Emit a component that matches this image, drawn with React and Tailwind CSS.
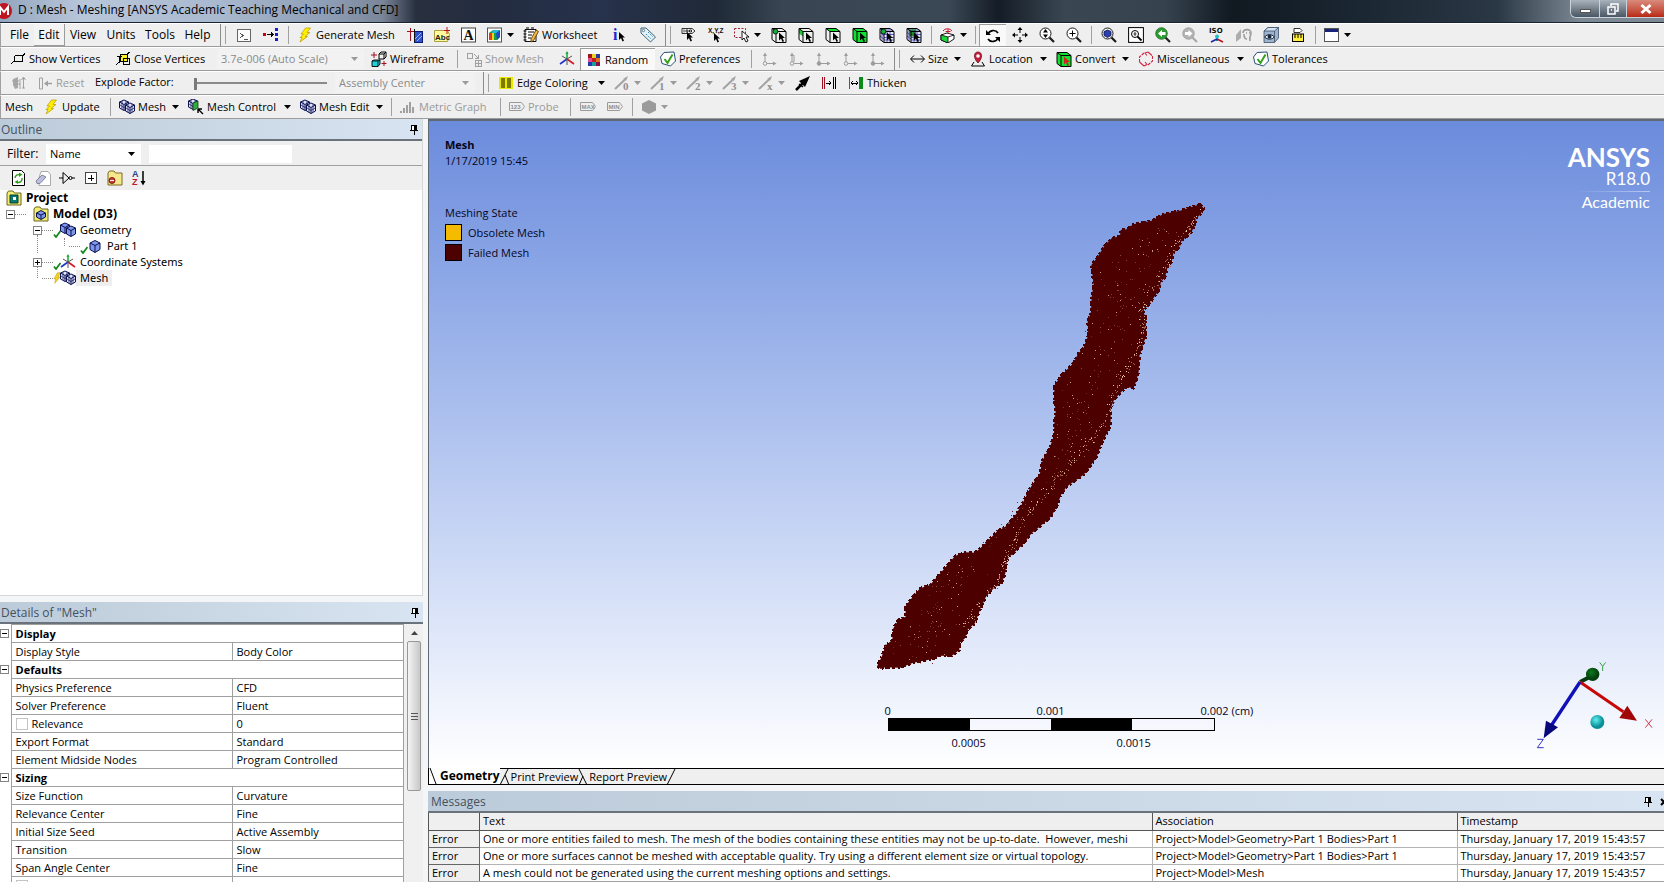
import React, { useState } from "react";

/* ---------- icons ---------- */

const Svg = ({ children, crisp }) => (
  <svg
    viewBox="0 0 16 16"
    className="w-4 h-4 shrink-0"
    fill="none"
    stroke="#000"
    shapeRendering={crisp ? "crispEdges" : "auto"}
  >
    {children}
  </svg>
);

const Cursor = ({ x = 7, y = 5, fill = "#000" }) => (
  <path
    transform={`translate(${x} ${y})`}
    d="M0 0v8l2-2 1.500 3.500 1.500-.7L3.500 5.500H6z"
    fill={fill}
    stroke="none"
  />
);

const SelectCube = ({ body = "#efefef", top, left, dot, grid, cursor = "#000" }) => (
  <Svg>
    <path d="M1 1.500h10l4 3v11H5l-4-3z" fill={body} stroke="none" />
    {top && <path d="M1 1.500h10l4 3H5z" fill={top} stroke="none" />}
    {left && <path d="M1 1.500l4 3v5l-4-3z" fill={left} stroke="none" />}
    {grid && (
      <path
        d="M5 7.500h10M5 10.500h10M5 13h10M8 4v11M11 4v11M3 2v12M4 3h10M1 5.500l4 3M1 9l4 3"
        stroke="#3c3c9c"
        strokeWidth=".8"
      />
    )}
    {grid === "green" && <path d="M3 2.500h7v7H3z" fill="#0a7a1a" stroke="none" opacity=".85" />}
    <path d="M1 1.500h10l4 3v11H5l-4-3zM1 1.500l4 3h10M5 4.500v11" strokeWidth="1" />
    {dot && <circle cx="4.500" cy="4.500" r="2.500" fill="#12b03a" strokeWidth=".8" />}
    <Cursor x={8} y={5.5} fill={cursor} />
  </Svg>
);

const MiniCube = ({ x = 0, y = 0, fill = "#7d97ea", mesh }) => (
  <g transform={`translate(${x} ${y})`}>
    <path d="M5 0l4.500 2v6L5 10.500.500 8V2z" fill={fill} stroke="#0b1050" />
    <path d="M.500 2L5 4.500 9.500 2M5 4.500v6" stroke="#0b1050" />
    {mesh && <path d="M1 5l4 2.500L9 5M3 1v8M7 1v8" stroke="#0b1050" strokeWidth=".7" />}
  </g>
);

const Bolt = () => (
  <Svg>
    <path d="M8.500 1h5L10 5.500h3L8 9.500h2.500L3 15l2-4.500H3L6.500 7H4z" fill="#ffee00" stroke="#b89a00" strokeWidth=".7" />
  </Svg>
);

const MeshCubes = () => (
  <Svg>
    <MiniCube x={0} y={1} fill="#dfe3fb" mesh />
    <MiniCube x={6} y={4} fill="#dfe3fb" mesh />
  </Svg>
);

const BodyCubes = () => (
  <Svg>
    <MiniCube x={0} y={1} />
    <MiniCube x={6} y={4} />
  </Svg>
);

const Triad = () => (
  <Svg>
    <path d="M8 8V1" stroke="#1fae3c" strokeWidth="1.600" />
    <path d="M8 8l7 5" stroke="#d11a2a" strokeWidth="1.600" />
    <path d="M8 8l-7 5" stroke="#2233cc" strokeWidth="1.600" />
    <path d="M8 8l-5-3M8 8l5-3M8 8v6" stroke="#555" strokeWidth="1" />
    <path d="M8 0l1.500 3h-3z" fill="#1fae3c" stroke="none" />
  </Svg>
);

const Check = () => (
  <Svg>
    <path d="M4 1.500L14 1l1.500 9-5 5L2 12.500.500 6z" fill="#fff" stroke="#28507c" />
    <path d="M4.500 8l3 4 5-8.500" stroke="#35a01c" strokeWidth="2" />
  </Svg>
);

const Lens = ({ children, handle = "#1a1a1a" }) => (
  <Svg>
    <circle cx="6.500" cy="6.500" r="5.500" fill="#fff" stroke="#1a1a1a" />
    <path d="M10.500 10.500l4.500 4.500" stroke={handle} strokeWidth="2.200" />
    {children}
  </Svg>
);

const AxisArrows = ({ lines, solid }) => (
  <Svg>
    <g stroke="#9c9c9c">
      <path d="M4 13V3M5 12.500h9" />
      <path d="M2 5l2-3.500L6 5zM12 10.500l3.500 2-3.500 2z" fill="#9c9c9c" stroke="none" />
      {lines === 2 && <path d="M6 11V4" />}
      <circle cx="4" cy="12.500" r="1.800" fill={solid ? "#9c9c9c" : "#efefef"} />
    </g>
  </Svg>
);

const EdgeLine = ({ label }) => (
  <Svg>
    <path d="M1 14l9.500-9" stroke="#a2a2a2" strokeWidth="2" />
    <path d="M9 4l5-3-2 5z" fill="#a2a2a2" stroke="none" />
    <text x="9" y="15" fontSize="11" fontFamily="Liberation Serif, serif" fontWeight="bold" fill="#8f8f8f" stroke="none">
      {label}
    </text>
  </Svg>
);

const Tag = ({ label }) => (
  <Svg>
    <path d="M.500 3.500h12l3 4-3 4H.500z" stroke="#9a9a9a" />
    <text x="1.500" y="10" fontSize="6" fontFamily="Liberation Sans, sans-serif" fontWeight="bold" fill="#8f8f8f" stroke="none">
      {label}
    </text>
  </Svg>
);

const icons = {
  console: (
    <Svg crisp>
      <rect x="1.500" y="2.500" width="13" height="12" fill="#fafafa" stroke="#666" />
      <path d="M4 6l3 2.500L4 11M8 12h4" stroke="#555" />
    </Svg>
  ),
  branch: (
    <Svg crisp>
      <path d="M0 6h3v3H0z" fill="#d00000" stroke="none" />
      <path d="M4 7.500h6M8 5.500l2 2-2 2" />
      <path d="M12 1h3v3h-3zM12 6h3v3h-3zM12 11h3v3h-3z" fill="#1020d0" stroke="none" />
    </Svg>
  ),
  section: (
    <Svg crisp>
      <path d="M7 4h8v11H7z" fill="#2f55d0" stroke="#0a1a70" />
      <path d="M8 12l6-6M10 14l5-5" stroke="#9fb7ff" />
      <path d="M0 4.500h7M3.500 1v13" stroke="#a01020" />
      <path d="M7.500 2v13" stroke="#111" />
    </Svg>
  ),
  abc: (
    <Svg>
      <path d="M.500 3.500h13l2 4-2 7H.500z" fill="#fffb9a" stroke="#a8a040" />
      <text x="1" y="13" fontSize="8" fontFamily="Liberation Sans, sans-serif" fontWeight="bold" fill="#222" stroke="none">
        Abc
      </text>
      <path d="M13 0v7M10 3.500h6" stroke="#c01020" />
    </Svg>
  ),
  text: (
    <Svg>
      <rect x=".500" y="1" width="14" height="14" fill="#fff" stroke="#444" />
      <text x="2.500" y="13" fontSize="14" fontFamily="Liberation Serif, serif" fontWeight="bold" fill="#111" stroke="none">
        A
      </text>
    </Svg>
  ),
  contour: (
    <Svg>
      <rect x=".500" y="1" width="14" height="14" fill="#fff" stroke="#555" />
      <path d="M2 6l4-3h7v7l-3 3H2z" fill="#18a040" stroke="none" />
      <path d="M2 6h3v7H2z" fill="#e03a20" stroke="none" />
      <path d="M5 6h2v7H5z" fill="#f2d21a" stroke="none" />
      <path d="M9 6l4-3v7l-3 3z" fill="#1b48d8" stroke="none" />
      <path d="M6 3h7L9 6H5z" fill="#25b8d8" stroke="none" />
    </Svg>
  ),
  worksheet: (
    <Svg>
      <path d="M2 2.500h11v12H2z" fill="#fff" stroke="#111" />
      <path d="M.500 4h3M.500 7h3M.500 10h3M.500 13h3M5 5h6M5 8h4M5 11h3M3 1h3M8 1h3" />
      <path d="M8 12l5-9 2.500 1.500-5 9L8 15z" fill="#f2b93a" stroke="#553300" strokeWidth=".8" />
    </Svg>
  ),
  info: (
    <Svg>
      <text x="0" y="13" fontSize="16" fontFamily="Liberation Serif, serif" fontWeight="bold" fill="#1a2ad0" stroke="none">
        i
      </text>
      <Cursor x={6} y={5} />
    </Svg>
  ),
  tag: (
    <Svg>
      <path d="M1 1l5 0 9.500 9-5 5L1 6z" fill="#e3f1f8" stroke="#3f6478" />
      <circle cx="3.500" cy="3.500" r="1.200" fill="#fff" stroke="#3f6478" strokeWidth=".8" />
      <path d="M6 7l5 5M8 5l5 5" stroke="#3f8ab0" strokeDasharray="1.500 1" />
    </Svg>
  ),
  pickLabel: (
    <Svg>
      <path d="M1 1.500h10l3 2.500-3 2.500H1z" fill="#fff" strokeWidth=".8" />
      <path d="M3 2.500v3M5 3h2v2H5zM8.500 3h2v2h-2z" strokeWidth=".8" />
      <Cursor x={6} y={5} />
    </Svg>
  ),
  pickXyz: (
    <Svg>
      <text x="0" y="5.500" fontSize="6.500" fontFamily="Liberation Sans, sans-serif" fontWeight="bold" fill="#111" stroke="none">
        X,Y,Z
      </text>
      <Cursor x={6} y={6} />
    </Svg>
  ),
  boxSelect: (
    <Svg>
      <rect x=".500" y="1.500" width="11" height="9" stroke="#a02038" strokeDasharray="2 1.500" />
      <path d="M8 4v9l2-2 2 4 2-1-2-4h3z" fill="#fff" strokeWidth=".9" />
    </Svg>
  ),
  selVertex: <SelectCube dot />,
  selEdge: <SelectCube left="#1fc83a" />,
  selFace: <SelectCube top="#10e030" />,
  selBody: <SelectCube body="#10e030" />,
  selNode: <SelectCube body="#e4e6fb" grid dot />,
  selElement: <SelectCube body="#d8dcf8" grid="green" />,
  convert: <SelectCube body="#10e030" cursor="#d02020" />,
  extend: (
    <Svg>
      <path d="M1 8l6-2 7 2v4l-6 4-7-3z" fill="#fff" strokeWidth=".9" />
      <path d="M1 8l7 2v6l-7-3z" fill="#19d838" strokeWidth=".8" />
      <path d="M8 10l6-2" strokeWidth=".8" />
      <path d="M3 4a5 4 0 0 1 9 0M8 2v5M5.500 4.500h5" stroke="#c01830" />
    </Svg>
  ),
  rotate: (
    <Svg>
      <path d="M3 6a5.500 5 0 0 1 10-1M13 10a5.500 5 0 0 1-10 1" strokeWidth="1.700" />
      <path d="M1 2v5h5zM15 14V9h-5z" fill="#000" stroke="none" />
    </Svg>
  ),
  pan: (
    <Svg>
      <path d="M8 2v4M8 10v4M2 8h4M10 8h4" />
      <path d="M8 0l2.500 3h-5zM8 16l2.500-3h-5zM0 8l3-2.500v5zM16 8l-3-2.500v5z" fill="#000" stroke="none" />
    </Svg>
  ),
  zoomDyn: (
    <Lens>
      <path d="M6.500 2l2.500 3.500H4zM6.500 11L9 7.500H4z" fill="#000" stroke="none" />
    </Lens>
  ),
  zoomIn: (
    <Lens>
      <path d="M6.500 3.500v6M3.500 6.500h6" />
    </Lens>
  ),
  zoomFit: (
    <Lens>
      <path d="M6.500 3L10 4.500v4L6.500 10.500 3 8.500v-4z" fill="#2a3fb0" stroke="#0b1050" strokeWidth=".8" />
    </Lens>
  ),
  zoomBox: (
    <Svg>
      <rect x=".600" y=".600" width="14.800" height="14.800" fill="#fff" />
      <circle cx="7" cy="7" r="3.500" />
      <path d="M9.500 9.500l4 4" strokeWidth="1.800" />
      <path d="M7 5v4M5.500 7h3" strokeWidth=".8" />
    </Svg>
  ),
  viewBack: (
    <Svg>
      <path d="M10.500 10.500l4.500 4.500" stroke="#222" strokeWidth="2.200" />
      <circle cx="6.500" cy="6.500" r="5.800" fill="#2f9a34" stroke="#1d6f22" strokeWidth=".8" />
      <path d="M3 6.500l4-3.500v2h3.500v3H7v2z" fill="#fff" stroke="none" />
    </Svg>
  ),
  viewNext: (
    <Svg>
      <path d="M10.500 10.500l4.500 4.500" stroke="#a8a8a8" strokeWidth="2.200" />
      <circle cx="6.500" cy="6.500" r="5.800" fill="#b2b2b2" stroke="#a0a0a0" strokeWidth=".8" />
      <path d="M10.500 6.500l-4-3.500v2H3v3h3.500v2z" fill="#fff" stroke="none" />
    </Svg>
  ),
  iso: (
    <Svg>
      <text x="0" y="6" fontSize="7" fontFamily="DejaVu Sans, sans-serif" fontWeight="bold" fill="#111" stroke="none">
        ISO
      </text>
      <path d="M8 8v6" stroke="#168f9a" strokeWidth="2" />
      <path d="M8 12l6 3" stroke="#b01020" strokeWidth="1.500" />
      <path d="M8 12l-6 3" stroke="#1a22b0" strokeWidth="1.500" />
      <circle cx="8" cy="9.500" r="2" fill="#20c0c0" stroke="none" />
    </Svg>
  ),
  lookAt: (
    <Svg>
      <path d="M0 8l5-6v9l-5 4z" fill="#adadad" stroke="none" />
      <path d="M7 6c0-4 8-5 8 0 0 3-2 3-1 8M8 7c0 3 1 5 3 5M10 6h1M13 6h1" stroke="#9c9c9c" strokeWidth="1.600" />
    </Svg>
  ),
  eye: (
    <Svg>
      <path d="M1 4l4-3.500h10.500V11l-4 4.500H1z" fill="#9fb3cc" stroke="#3a4f6c" strokeWidth=".8" />
      <path d="M1 4h10.500l4-3.500H5z" fill="#d5e2f0" stroke="#3a4f6c" strokeWidth=".8" />
      <path d="M11.500 4v11.500" stroke="#3a4f6c" strokeWidth=".8" />
      <path d="M1.500 10q5-5 10 0-5 4.500-10 0z" fill="#fff" stroke="#13233c" />
      <circle cx="6.500" cy="9.800" r="2" fill="#13233c" stroke="none" />
    </Svg>
  ),
  ruler: (
    <Svg>
      <path d="M4 1.500h6l2 2-2 2H4z" fill="#fff" strokeWidth=".8" />
      <rect x="2.500" y="7" width="11" height="7.500" fill="#ffee3a" />
      <path d="M5 7v4M8 7v4M11 7v4" />
    </Svg>
  ),
  windowBox: (
    <Svg crisp>
      <rect x=".500" y="1.500" width="14" height="13" fill="#fff" stroke="#555" />
      <path d="M1 3h13" stroke="#1a237a" strokeWidth="3" />
    </Svg>
  ),
  showVertices: (
    <Svg crisp>
      <path d="M5 4.500h8M4.500 5v5M1 13l3-3M13 4.500l2-2M12.500 4v6h-8V5" strokeWidth="1" />
    </Svg>
  ),
  closeVertices: (
    <Svg crisp>
      <path d="M5 3h7v7H5z" fill="#ffee20" />
      <path d="M8 7h6v6H8zM2 5h5M4 5v7M1 14l3-3M12 3l3-2" />
    </Svg>
  ),
  wireframe: (
    <Svg>
      <path d="M8 3l2-2h5v5l-2 2H8zM8 3h5v5M13 3l2-2" fill="none" strokeWidth="1" />
      <path d="M1 10l2-1h6v4l-2 2.500H1z" fill="#20d0d8" strokeWidth=".9" />
      <path d="M1 10h6v5.500M7 10l2-1" strokeWidth=".8" />
      <path d="M3 1v6M0 4h6M13 10v5M10.500 12.500h5" stroke="#a01020" />
    </Svg>
  ),
  showMesh: (
    <Svg crisp>
      <g stroke="#a0a0a0">
        <path d="M1 2h5v5H1zM9 9h6v6H9zM12 9v6M9 12h6M8 3l4 4M12 4v3H9" />
      </g>
    </Svg>
  ),
  triad: <Triad />,
  random: (
    <Svg crisp>
      <g stroke="none">
        <path d="M2 2h4v4H2z" fill="#a01818" />
        <path d="M6 2h4v4H6z" fill="#f0d020" />
        <path d="M10 2h4v4h-4z" fill="#283a9c" />
        <path d="M2 6h4v4H2z" fill="#e04a90" />
        <path d="M6 6h4v4H6z" fill="#c02020" />
        <path d="M10 6h4v4h-4z" fill="#e07020" />
        <path d="M2 10h4v4H2z" fill="#2038b0" />
        <path d="M6 10h4v4H6z" fill="#18a0a0" />
        <path d="M10 10h4v4h-4z" fill="#881048" />
      </g>
    </Svg>
  ),
  check: <Check />,
  size: (
    <Svg>
      <path d="M2 8h13M5 4.500L1.500 8 5 11.500M12 4.500L15.500 8 12 11.500" />
    </Svg>
  ),
  location: (
    <Svg>
      <path d="M8 12C3 7 3.500 1 8 1s5 6 0 11z" fill="#c01f3c" stroke="#7c0a20" strokeWidth=".8" />
      <circle cx="8" cy="5" r="1.800" fill="#fff" stroke="none" />
      <path d="M4 11l-2.500 4h13L12 11" />
    </Svg>
  ),
  misc: (
    <Svg>
      <g stroke="#d02848" strokeWidth="1.100">
        <path d="M6 2L1.500 6v5M10 14l4.500-4V5" strokeDasharray="3 1" />
        <path d="M10 1l4 3.500M6 15l-4.500-4M10 1l-3 1 2 2.500M6 15l3-1.500L7 11" />
      </g>
    </Svg>
  ),
  explode: (
    <Svg>
      <path d="M2 4l5-2v11l-3 1-2-4z" fill="#a8a8a8" stroke="none" />
      <path d="M1 6h7M3 9h6M9 4v10M11 13h3M12.500 13V3M10.500 5l2-3 2 3" stroke="#a0a0a0" />
    </Svg>
  ),
  reset: (
    <Svg>
      <path d="M2.500 3h3v11h-3z" stroke="#a0a0a0" />
      <path d="M8 8.500h7" stroke="#a0a0a0" strokeWidth="1.500" />
      <path d="M7 8.500l4-3v6z" fill="#a0a0a0" stroke="none" />
    </Svg>
  ),
  edgeColor: (
    <Svg crisp>
      <path d="M1 2h14v12H1z" fill="#e8e800" stroke="none" />
      <path d="M3 3h4v10H3zM9 3h4v10H9z" fill="#7c7a00" stroke="none" />
    </Svg>
  ),
  blackArrow: (
    <Svg>
      <path d="M1 15l7-7" strokeWidth="2.500" />
      <path d="M15 1L4 6l6 6z" fill="#000" stroke="none" />
      <path d="M4 9l4 3" strokeWidth="1.500" />
    </Svg>
  ),
  gap: (
    <Svg crisp>
      <path d="M0 2v12M2 2v12" stroke="#a01020" />
      <path d="M4 8h4M7 6l2 2-2 2" />
      <path d="M11 2v12M13 2v12" />
    </Svg>
  ),
  thicken: (
    <Svg crisp>
      <path d="M1.500 2v12" stroke="#0a8a1a" />
      <path d="M3 8h7M5 6L3 8l2 2M8 6l2 2-2 2" />
      <path d="M11 2h4v12h-4z" fill="#0a8a1a" stroke="none" />
    </Svg>
  ),
  meshControl: (
    <Svg>
      <MiniCube x={0} y={0} fill="#dfe3fb" mesh />
      <path d="M5 4l5-2v7l-5 2.500z" fill="#2fae3c" stroke="#064010" strokeWidth=".8" />
      <path d="M10 10l5 5M10 10v4M10 10h4" strokeWidth="1.400" />
    </Svg>
  ),
  graph: (
    <Svg crisp>
      <path d="M1 14v-2M4 14V9M7 14V6M10 14V3M13 14V8" stroke="#a0a0a0" strokeWidth="2" />
    </Svg>
  ),
  hexagon: (
    <Svg>
      <path d="M8 1l7 3.500v7L8 15l-7-3.500v-7z" fill="#9b9b9b" stroke="none" />
    </Svg>
  ),
  refresh: (
    <Svg>
      <path d="M2.500.500h9l3 3v12h-12z" fill="#fff" />
      <path d="M5 8a3.500 3.500 0 0 1 5-3M12 8a3.500 3.500 0 0 1-5 4" stroke="#2f9a1c" strokeWidth="1.400" />
      <path d="M9 2.500l3.500 2L9 7zM8 10l-3.500 2L8 14z" fill="#2f9a1c" stroke="none" />
    </Svg>
  ),
  eraser: (
    <Svg>
      <path d="M6 1.500h7l2.500 3v11H4V8z" fill="#fff" stroke="#aaa" />
      <path d="M1 11l6-6 4 2-6 6.500H2z" fill="#b9bfdd" stroke="#7a7a94" strokeWidth=".9" />
    </Svg>
  ),
  gate: (
    <Svg>
      <path d="M0 8h4M4 2.500l6 5.500-6 5.500zM13 8h3" />
      <circle cx="11.500" cy="8" r="1.500" />
    </Svg>
  ),
  plusBox: (
    <Svg crisp>
      <rect x="2.500" y="2.500" width="11" height="11" fill="#fff" stroke="#444" />
      <path d="M5 8h6M8 5v6" />
    </Svg>
  ),
  folder: (
    <Svg>
      <path d="M1 3l1.500-2H7l1.500 2H15v12H1z" fill="#f6e88c" stroke="#7c6a20" />
      <circle cx="5" cy="10.500" r="3" fill="#d04040" stroke="#600" strokeWidth=".8" />
      <path d="M3 10.500h4" stroke="#fff" />
    </Svg>
  ),
  sort: (
    <Svg>
      <g fontFamily="Liberation Sans, sans-serif" fontWeight="bold" fontSize="9" stroke="none">
        <text x="1" y="7" fill="#27408b">
          A
        </text>
        <text x="1" y="15" fill="#c01828">
          Z
        </text>
      </g>
      <path d="M12 1v11" strokeWidth="1.500" />
      <path d="M9.500 11h5L12 15.500z" fill="#000" stroke="none" />
    </Svg>
  ),
  project: (
    <Svg>
      <path d="M1 3l1.500-2H7l1.500 2H15v12H1z" fill="#f3ee70" stroke="#6b6420" />
      <path d="M4 5h8v8H4z" fill="#0a7a70" stroke="#063c38" />
      <path d="M7 7h3v3H7z" fill="#fff" stroke="none" />
    </Svg>
  ),
  model: (
    <Svg>
      <path d="M1 3l1.500-2H7l1.500 2H15v12H1z" fill="#f3ee70" stroke="#6b6420" />
      <path d="M8 4.500L12.500 7v4L8 13.500 3.500 11V7z" fill="#7d97ea" stroke="#0b1050" />
      <path d="M3.500 7L8 9l4.500-2M8 9v4" stroke="#0b1050" />
    </Svg>
  ),
  part: (
    <Svg>
      <path d="M8 2.500l5 2.500v6.500L8 14.500l-5-3V5z" fill="#7d97ea" stroke="#0b1050" />
      <path d="M3 5l5 2.500L13 5M8 7.500v7" stroke="#0b1050" />
    </Svg>
  ),
  bodies: <BodyCubes />,
  mesh: <MeshCubes />,
  bolt: <Bolt />,
};

const Caret = ({ muted }) => (
  <svg viewBox="0 0 7 4" className="w-[7px] h-1 shrink-0">
    <path d="M0 0h7L3.500 4z" fill={muted ? "#9a9a9a" : "#000"} />
  </svg>
);

const Pin = () => (
  <svg viewBox="0 0 8 10" className="w-2 h-[10px] shrink-0" shapeRendering="crispEdges">
    <path d="M1 0h6v5h1v1H0V5h1zM3.500 6h1v4h-1z" fill="#000" />
    <path d="M2 1h2v4H2z" fill="#fff" />
  </svg>
);

/* ---------- toolbar pieces ---------- */

const Bar = ({ children }) => (
  <div className="flex items-center h-6 pl-1 overflow-hidden border-t border-b border-l border-t-white border-b-[#9c9c9c] border-l-[#a0a0a0] bg-[#efefef]">
    {children}
  </div>
);

const Sep = () => (
  <div className="flex justify-center w-2 h-[18px] shrink-0">
    <div className="w-px bg-[#a0a0a0]" />
  </div>
);

const GroupEnd = () => (
  <div className="flex justify-center h-full gap-1 w-3.5 shrink-0">
    <div className="w-px bg-[#8c8c8c]" />
    <div className="w-px my-0.5 bg-[#a0a0a0]" />
  </div>
);

const Tool = ({ icon, label, caret, muted, pressed, width = "w-[27px]" }) => {
  const plain = !label && !caret;
  return (
    <button
      type="button"
      aria-label={label ? undefined : typeof icon === "string" ? icon : "tool"}
      disabled={muted}
      className={`flex items-center h-[22px] shrink-0 whitespace-nowrap ${width} ${
        plain ? "justify-center" : "gap-[3px] pl-[5px] pr-1"
      } ${muted ? "text-[#9a9a9a]" : "text-black"} ${
        pressed ? "bg-[#f9f9f9] border-l border-t border-[#9c9c9c]" : ""
      }`}
    >
      {typeof icon === "string" ? icons[icon] : icon}
      {label}
      {caret && (
        <span className="ml-auto">
          <Caret muted={muted} />
        </span>
      )}
    </button>
  );
};

const Combo = ({ label, value, muted, className }) => (
  <div className={`relative shrink-0 ${className}`}>
    <select
      aria-label={label}
      disabled={muted}
      className={`block w-full h-5 pl-1 appearance-none opacity-100 ${
        muted ? "bg-[#f2f2f2] text-[#8a8a8a]" : "bg-white text-black"
      }`}
    >
      <option>{value}</option>
    </select>
    <span className="absolute flex items-center pointer-events-none inset-y-0 right-1.5">
      <Caret muted={muted} />
    </span>
  </div>
);

const PaneTitle = ({ children, closable }) => (
  <div className="flex items-center h-[22px] pt-px pl-px pr-1 shrink-0 overflow-hidden border-b-2 border-[#6a737c] bg-linear-to-r from-[#bccbd9] to-[#d8e4f1] text-[#44515e] text-[12px]">
    <h2 className="flex-1">{children}</h2>
    <Pin />
    {closable && (
      <button type="button" aria-label="Close messages" className="w-1 h-2 ml-2 -mr-1 overflow-hidden">
        <svg viewBox="0 0 8 8" className="w-2 h-2" stroke="#000" strokeWidth="2">
          <path d="M1 1l6 6M7 1L1 7" />
        </svg>
      </button>
    )}
  </div>
);

/* ---------- title bar ---------- */

const TitleBar = () => (
  <header className="relative flex items-center h-[23px] pl-[18px] pb-0.5 shrink-0 border-b border-[#1a2330] text-black text-[12px] bg-[linear-gradient(90deg,#93a5be_0%,#b8c6da_5%,#a9b9cf_13%,#8c9cb4_20%,#7a8598_23%,#28303f_25%,#232c40_30%,#27324c_36%,#1f2937_43%,#394552_47%,#3a4855_57%,#141c26_60%,#3a4753_64%,#36434f_70%,#111921_74%,#1b2733_82%,#2a3744_90%,#7c8995_95%)]">
    <svg viewBox="0 0 12 16" className="absolute left-0 top-[3px] w-3 h-4">
      <circle cx="4" cy="8" r="8" fill="#c01420" />
      <path d="M0 12V4l4 5 4-5v8" fill="none" stroke="#fff" strokeWidth="2" />
    </svg>
    <h1 className="whitespace-nowrap">D : Mesh - Meshing [ANSYS Academic Teaching Mechanical and CFD]</h1>
    <div className="absolute right-0 top-0 flex h-[18px] overflow-hidden border border-t-0 border-r-0 rounded-bl-md border-[#c9d2da]">
      <button type="button" aria-label="Minimize" className="flex items-end justify-center pb-1 w-7 bg-linear-to-b from-[#a9b3bd] to-[#4a5663]">
        <span className="w-[11px] h-1 bg-white border border-[#555]" />
      </button>
      <button type="button" aria-label="Restore" className="flex items-center justify-center w-7 border-x border-[#c9d2da] bg-linear-to-b from-[#a9b3bd] to-[#4a5663]">
        <svg viewBox="0 0 12 12" className="w-3 h-3" fill="none" stroke="#fff" strokeWidth="1.500">
          <path d="M4 3V1h7v7H9M1 4h7v7H1zM4 7h1" />
        </svg>
      </button>
      <button type="button" aria-label="Close" className="flex items-center justify-center w-[37px] bg-linear-to-b from-[#d98a7c] to-[#b8260f]">
        <svg viewBox="0 0 12 12" className="w-3 h-3" stroke="#fff" strokeWidth="3">
          <path d="M1.500 2l9 8M10.500 2l-9 8" />
        </svg>
      </button>
    </div>
  </header>
);

const Toolbars = () => (
  <div className="shrink-0">
    <Bar>
      <nav className="flex w-[211px] shrink-0 text-[12px]">
        <button type="button" className="w-[29px]">File</button>
        <button type="button" className="h-[22px] w-[31px] bg-[#f3f3f3] border-r border-b border-[#9c9c9c]">Edit</button>
        <button type="button" className="w-9">View</button>
        <button type="button" className="w-10">Units</button>
        <button type="button" className="w-[38px]">Tools</button>
        <button type="button" className="w-[37px]">Help</button>
      </nav>
      <GroupEnd />
      <Tool icon="console" />
      <Tool icon="branch" />
      <Sep />
      <Tool icon="bolt" label="Generate Mesh" width="w-[109px]" />
      <Tool icon="section" />
      <Tool icon="abc" />
      <Tool icon="text" />
      <Tool icon="contour" caret width="w-9" />
      <Tool icon="worksheet" label="Worksheet" width="w-[89px]" />
      <Tool icon="info" />
      <Tool icon="tag" />
      <GroupEnd />
      <Tool icon="pickLabel" />
      <Tool icon="pickXyz" />
      <Tool icon="boxSelect" caret width="w-9" />
      <Tool icon="selVertex" />
      <Tool icon="selEdge" />
      <Tool icon="selFace" />
      <Tool icon="selBody" />
      <Tool icon="selNode" />
      <Tool icon="selElement" />
      <Sep />
      <Tool icon="extend" caret width="w-9" />
      <Sep />
      <Tool icon="rotate" pressed />
      <Tool icon="pan" />
      <Tool icon="zoomDyn" />
      <Tool icon="zoomIn" />
      <Sep />
      <Tool icon="zoomFit" />
      <Tool icon="zoomBox" />
      <Tool icon="viewBack" />
      <Tool icon="viewNext" muted />
      <Tool icon="iso" />
      <Tool icon="lookAt" muted />
      <Tool icon="eye" />
      <Tool icon="ruler" />
      <Sep />
      <Tool icon="windowBox" caret width="w-9" />
    </Bar>

    <Bar>
      <Tool icon="showVertices" label="Show Vertices" width="w-[105px]" />
      <Tool icon="closeVertices" label="Close Vertices" width="w-[105px]" />
      <Combo label="Vertex tolerance" value="3.7e-006 (Auto Scale)" muted className="mx-0.5 w-[147px]" />
      <Tool icon="wireframe" label="Wireframe" width="w-[87px]" />
      <Sep />
      <Tool icon="showMesh" label="Show Mesh" muted width="w-[92px]" />
      <Tool icon="triad" />
      <Tool icon="random" label="Random" pressed width="w-[75px]" />
      <Tool icon="check" label="Preferences" width="w-[92px]" />
      <Sep />
      <Tool icon={<AxisArrows />} muted />
      <Tool icon={<AxisArrows lines={2} />} muted />
      <Tool icon={<AxisArrows solid />} muted />
      <Tool icon={<AxisArrows />} muted />
      <Tool icon={<AxisArrows solid />} muted />
      <GroupEnd />
      <Tool icon="size" label="Size" caret width="w-[61px]" />
      <Tool icon="location" label="Location" caret width="w-[86px]" />
      <Tool icon="convert" label="Convert" caret width="w-[82px]" />
      <Tool icon="misc" label="Miscellaneous" caret width="w-[115px]" />
      <Tool icon="check" label="Tolerances" width="w-[92px]" />
    </Bar>

    <Bar>
      <Tool icon="explode" muted />
      <Tool icon="reset" label="Reset" muted width="w-[61px]" />
      <label htmlFor="explode" className="pb-0.5 pl-0.5 w-[101px] shrink-0 whitespace-nowrap">
        Explode Factor:
      </label>
      <input
        id="explode"
        type="range"
        defaultValue="0"
        className="w-[133px] h-4 shrink-0 appearance-none bg-transparent [&::-webkit-slider-runnable-track]:h-[2px] [&::-webkit-slider-runnable-track]:bg-[#8a8a8a] [&::-webkit-slider-thumb]:appearance-none [&::-webkit-slider-thumb]:w-[3px] [&::-webkit-slider-thumb]:h-3 [&::-webkit-slider-thumb]:-mt-1 [&::-webkit-slider-thumb]:bg-[#7a7a7a]"
      />
      <Combo label="Explode center" value="Assembly Center" muted className="ml-2 mr-1 w-[140px]" />
      <GroupEnd />
      <Tool icon="edgeColor" label="Edge Coloring" caret width="w-[116px]" />
      <Tool icon={<EdgeLine label="0" />} caret muted width="w-9" />
      <Tool icon={<EdgeLine label="1" />} caret muted width="w-9" />
      <Tool icon={<EdgeLine label="2" />} caret muted width="w-9" />
      <Tool icon={<EdgeLine label="3" />} caret muted width="w-9" />
      <Tool icon={<EdgeLine label="x" />} caret muted width="w-9" />
      <Tool icon="blackArrow" />
      <Tool icon="gap" />
      <Tool icon="thicken" label="Thicken" width="w-[75px]" />
    </Bar>

    <Bar>
      <span className="w-[33px] shrink-0">Mesh</span>
      <Tool icon="bolt" label="Update" width="w-[68px]" />
      <Sep />
      <Tool icon="mesh" label="Mesh" caret width="w-[69px]" />
      <Tool icon="meshControl" label="Mesh Control" caret width="w-[112px]" />
      <Tool icon="mesh" label="Mesh Edit" caret width="w-[92px]" />
      <Sep />
      <Tool icon="graph" label="Metric Graph" muted width="w-[101px]" />
      <Sep />
      <Tool icon={<Tag label="123" />} label="Probe" muted width="w-[62px]" />
      <Sep />
      <Tool icon={<Tag label="MAX" />} muted />
      <Tool icon={<Tag label="MIN" />} muted />
      <Sep />
      <Tool icon="hexagon" caret muted width="w-9" />
    </Bar>
  </div>
);

/* ---------- outline ---------- */

const Toggle = ({ open = true }) => (
  <svg viewBox="0 0 9 9" className="w-[9px] h-[9px] shrink-0" shapeRendering="crispEdges">
    <rect x=".500" y=".500" width="8" height="8" fill="#fff" stroke="#848484" />
    <path d={open ? "M2 4.500h5" : "M2 4.500h5M4.500 2v5"} stroke="#000" />
  </svg>
);

const Dots = () => <span className="w-[11px] border-t border-dotted border-[#888]" />;

const Tick = () => (
  <svg viewBox="0 0 8 8" className="self-end w-2 h-2 -mr-px">
    <path d="M1 4.500l2 2.500 4.500-6" fill="none" stroke="#128a1c" strokeWidth="1.800" />
  </svg>
);

const tree = [
  { label: "Project", icon: "project", bold: true, pad: "pl-[6px]" },
  { label: "Model (D3)", icon: "model", bold: true, pad: "pl-[6px]", toggle: "open" },
  { label: "Geometry", icon: "bodies", pad: "pl-[33px]", toggle: "open", state: "ok" },
  { label: "Part 1", icon: "part", pad: "pl-[60px]", state: "ok" },
  { label: "Coordinate Systems", icon: "triad", pad: "pl-[33px]", toggle: "closed", state: "ok" },
  { label: "Mesh", icon: "mesh", pad: "pl-[33px]", state: "bolt", selected: true },
];

const TreeRow = ({ node }) => (
  <li className={`flex items-center h-4 whitespace-nowrap ${node.pad}`}>
    {node.toggle && <Toggle open={node.toggle === "open"} />}
    {!node.toggle && node.state && <span className="w-[9px] shrink-0" />}
    {(node.toggle || node.state) && <Dots />}
    {node.state === "ok" && <Tick />}
    {node.state === "bolt" && (
      <svg viewBox="0 0 8 12" className="w-[7px] h-3">
        <path d="M5 0h3L6 5h2l-6 7 1-5H1z" fill="#f5d020" stroke="#b09000" strokeWidth=".5" />
      </svg>
    )}
    {node.toggle && !node.state && <span className="w-[7px]" />}
    {icons[node.icon]}
    <span
      className={`px-1 leading-4 ${node.bold ? "font-bold text-[12px]" : ""} ${
        node.selected ? "bg-[#efefef]" : ""
      }`}
    >
      {node.label}
    </span>
  </li>
);

const Outline = () => (
  <section className="flex flex-col flex-1 min-h-0 bg-white border-b border-r border-[#d8d8d8]">
    <PaneTitle>Outline</PaneTitle>
    <div className="flex items-center h-[25px] pt-px shrink-0 border-b border-[#a0a0a0] bg-[#efefef]">
      <label htmlFor="filterText" className="pl-[7px] w-[46px] text-[12px]">
        Filter:
      </label>
      <Combo label="Filter by" value="Name" className="w-[95px]" />
      <input id="filterText" type="text" className="ml-2 w-[143px] h-[18px] bg-white outline-none" />
    </div>
    <div className="flex items-center h-6 pl-1 shrink-0 bg-[#efefef]">
      <Tool icon="refresh" />
      <Tool icon="eraser" width="w-6" />
      <Tool icon="gate" width="w-6" />
      <Tool icon="plusBox" width="w-6" />
      <Tool icon="folder" width="w-6" />
      <Tool icon="sort" width="w-6" />
    </div>
    <div className="relative flex-1 text-[11px] font-['Noto_Sans',sans-serif]">
      <ul>
        {tree.map((node) => (
          <TreeRow key={node.label} node={node} />
        ))}
      </ul>
      {/* tree guide lines */}
      <span className="absolute left-[37px] top-[45px] h-[18px] border-l border-dotted border-[#888]" />
      <span className="absolute left-[37px] top-[77px] h-[11px] border-l border-dotted border-[#888]" />
      <span className="absolute left-16 top-12 h-2 border-l border-dotted border-[#888]" />
    </div>
  </section>
);

/* ---------- details ---------- */

const details = [
  { group: "Display" },
  { name: "Display Style", value: "Body Color" },
  { group: "Defaults" },
  { name: "Physics Preference", value: "CFD" },
  { name: "Solver Preference", value: "Fluent" },
  { name: "Relevance", value: "0", check: true },
  { name: "Export Format", value: "Standard" },
  { name: "Element Midside Nodes", value: "Program Controlled" },
  { group: "Sizing" },
  { name: "Size Function", value: "Curvature" },
  { name: "Relevance Center", value: "Fine" },
  { name: "Initial Size Seed", value: "Active Assembly" },
  { name: "Transition", value: "Slow" },
  { name: "Span Angle Center", value: "Fine" },
  { name: "Curvature Normal Angle", value: "Default (18.0 °)", check: true },
];

const Details = () => (
  <section className="flex flex-col h-[280px] shrink-0 mt-1.5 bg-[#f0f0f0]">
    <PaneTitle>Details of "Mesh"</PaneTitle>
    <div className="flex flex-1 min-h-0 overflow-hidden">
      <div className="flex-1 bg-white">
        <table className="w-full table-fixed border-collapse">
          <colgroup>
            <col className="w-[11px]" />
            <col className="w-[221px]" />
            <col />
          </colgroup>
          <tbody>
            {details.map((row) =>
              row.group ? (
                <tr key={row.group} className="h-[18px]">
                  <td className="p-0 align-middle">
                    <Toggle />
                  </td>
                  <th colSpan={2} className="p-0 pl-1 font-bold text-left border border-[#a0a0a0] leading-4">
                    {row.group}
                  </th>
                </tr>
              ) : (
                <tr key={row.name} className="h-[18px]">
                  <td className="p-0" />
                  <td className="p-0 pl-1 border border-[#a0a0a0] leading-4 whitespace-nowrap">
                    {row.check ? (
                      <label className="flex items-center gap-1">
                        <input type="checkbox" className="appearance-none w-3 h-3 bg-white border border-[#c4c4c4]" />
                        {row.name}
                      </label>
                    ) : (
                      row.name
                    )}
                  </td>
                  <td className="p-0 pl-1 border border-[#a0a0a0] leading-4 whitespace-nowrap">{row.value}</td>
                </tr>
              )
            )}
          </tbody>
        </table>
      </div>
      {/* scrollbar */}
      <div className="flex flex-col items-center ml-px w-[18px] bg-[#f0f0f0]">
        <div className="flex items-center h-[17px]">
          <svg viewBox="0 0 7 4" className="w-[7px] h-1">
            <path d="M0 4h7L3.500 0z" fill="#444" />
          </svg>
        </div>
        <div className="flex flex-col items-center justify-center gap-0.5 w-[14px] h-[150px] border border-[#989898] rounded-xs bg-linear-to-r from-[#f4f4f4] to-[#c8c8c8]">
          <span className="w-[7px] h-px bg-[#555]" />
          <span className="w-[7px] h-px bg-[#555]" />
          <span className="w-[7px] h-px bg-[#555]" />
        </div>
      </div>
    </div>
  </section>
);

/* ---------- viewport ---------- */

const OUTLINE =
  "M1020 43L1031 55L1020 75L1008 85L1003 110L992 130L965 152L955 175L940 190L935 215L922 235L915 262L903 275L897 300L880 325L865 345L848 362L857 380L858 410L858 440L848 465L838 500L836 545L828 575L820 595L800 590L780 610L762 630L752 655L752 690L750 710L738 735L725 760L710 800L690 830L670 855L645 872L620 890L603 915L592 945L575 978L545 1005L515 1030L490 1062L465 1085L445 1103L438 1125L436 1150L425 1180L400 1195L378 1220L362 1255L345 1300L322 1320L315 1345L298 1360L298 1380L275 1398L240 1397L215 1408L160 1418L120 1433L75 1432L62 1437L52 1427L65 1400L78 1365L97 1350L100 1315L115 1290L137 1280L137 1248L155 1225L180 1195L210 1185L245 1145L285 1098L315 1087L345 1088L375 1062L410 1025L440 1007L470 970L490 935L510 895L540 850L548 810L570 772L582 735L583 700L587 665L582 620L584 585L605 555L640 520L655 490L670 475L685 435L683 395L693 365L695 320L701 285L694 225L710 205L735 165L755 145L780 138L782 120L800 118L820 103L875 92L910 72L960 62Z";

// the visible grid holes gather along the ridge on the right side
const RIDGE = [
  [1018, 55, 10], [985, 120, 12], [945, 165, 12], [915, 235, 14], [870, 300, 22], [842, 360, 10], [850, 420, 8],
  [825, 490, 16], [790, 550, 14], [760, 610, 10], [735, 700, 10], [690, 750, 18], [640, 810, 14], [590, 870, 16],
  [530, 935, 12], [490, 990, 10], [460, 1060, 12], [434, 1110, 6], [410, 1180, 12], [340, 1260, 22], [310, 1310, 14],
];

const SPINE = [
  [930, 110, 60], [820, 200, 90], [780, 290, 75], [765, 370, 75], [740, 480, 70], [690, 590, 80], [655, 680, 60],
  [620, 760, 40], [570, 860, 25], [330, 1130, 55], [250, 1200, 70], [220, 1280, 90], [200, 1350, 80], [120, 1400, 45],
];

const makeSpecks = () => {
  let seed = 7;
  const rnd = () => {
    seed = (seed * 16807) % 2147483647;
    return seed / 2147483647;
  };
  const out = [];
  const scatter = (line, count, tones) => {
    for (let i = 0; i < line.length - 1; i++) {
      for (let k = 0; k < count; k++) {
        const t = rnd();
        const spread = line[i][2] * (rnd() + rnd() - 1);
        const x = line[i][0] + (line[i + 1][0] - line[i][0]) * t + spread;
        const y = line[i][1] + (line[i + 1][1] - line[i][1]) * t + spread * 0.4;
        out.push([Math.round(x / 3) * 3, Math.round(y / 3) * 3, tones[Math.floor(rnd() * tones.length)]]);
      }
    }
  };
  scatter(RIDGE, 20, ["#e8c8a0", "#c08a70", "#a87058", "#94604c"]);
  scatter(SPINE, 26, ["#8c4a3c", "#6e2a22", "#c89c80", "#7c3a30"]);
  return out;
};

const specks = makeSpecks();

const MeshBody = () => (
  <svg viewBox="0 0 1080 1470" className="absolute left-1/2 top-[69px] -ml-[187px] w-[360px] h-[490px]">
    <path d={OUTLINE} fill="#4d0000" />
    {/* broken outline gives the rough faceted edge */}
    <path d={OUTLINE} fill="none" stroke="#4d0000" strokeWidth="8" strokeDasharray="9 6 14 5 6 8" shapeRendering="crispEdges" />
    <g shapeRendering="crispEdges">
      {specks.map(([x, y, fill], i) => (
        <rect key={i} x={x} y={y} width="3" height="3" fill={fill} />
      ))}
    </g>
  </svg>
);

const ScaleBar = () => (
  <div className="absolute bottom-[17px] left-1/2 -ml-[159px] w-[370px] leading-4">
    <div className="relative h-[15px]">
      <span className="absolute -left-[3px]">0</span>
      <span className="absolute left-[149px]">0.001</span>
      <span className="absolute left-[313px]">0.002 (cm)</span>
    </div>
    <div className="flex w-[327px] h-[13px] border border-black">
      <span className="flex-1 bg-black" />
      <span className="flex-1" />
      <span className="flex-1 bg-black" />
      <span className="flex-1" />
    </div>
    <div className="relative h-5 pt-1">
      <span className="absolute left-16">0.0005</span>
      <span className="absolute left-[229px]">0.0015</span>
    </div>
  </div>
);

const AxisTriad = () => (
  <svg viewBox="0 0 492 384" className="absolute bottom-0 right-0 w-[164px] h-32">
    <defs>
      <radialGradient id="ball" cx="40%" cy="35%">
        <stop offset="0" stopColor="#5ff0f0" />
        <stop offset="1" stopColor="#0a8f98" />
      </radialGradient>
      <radialGradient id="knob" cx="40%" cy="35%">
        <stop offset="0" stopColor="#0c7a1e" />
        <stop offset="1" stopColor="#04400c" />
      </radialGradient>
    </defs>
    <path d="M240 126L275 108" stroke="#063c10" strokeWidth="12" />
    <circle cx="278" cy="103" r="20" fill="url(#knob)" />
    <path d="M240 126L370 215" stroke="#c80808" strokeWidth="9" />
    <path d="M382 197L411 242L358 234z" fill="#a00808" />
    <path d="M240 126L155 255" stroke="#1010b8" strokeWidth="10" />
    <path d="M138 242L174 262L131 295z" fill="#08087c" />
    <circle cx="292" cy="246" r="21" fill="url(#ball)" />
    <g fill="none" strokeWidth="3">
      <path d="M299 67l9 12 9-12M308 79v14" stroke="#3aa048" />
      <path d="M436 238l20 25M456 238l-20 25" stroke="#d03848" />
      <path d="M112 298h18l-18 25h19" stroke="#3434c8" />
    </g>
  </svg>
);

const Viewport = () => (
  <div className="relative flex-1 min-h-0 overflow-hidden border-t-2 border-l border-[#5f6873] bg-linear-to-b from-[#6b8bdc] to-white text-[#05051c]">
    <div className="absolute left-4 top-4 leading-4">
      <p className="font-bold">Mesh</p>
      <p>1/17/2019 15:45</p>
    </div>
    <div className="absolute left-4 top-[84px] flex flex-col gap-[3px]">
      <p className="leading-4">Meshing State</p>
      <p className="flex items-center gap-1.5 leading-[17px]">
        <span className="bg-[#f5bb00] border border-black w-[17px] h-[17px]" />
        Obsolete Mesh
      </p>
      <p className="flex items-center gap-1.5 leading-[17px]">
        <span className="bg-[#4d0000] border border-black w-[17px] h-[17px]" />
        Failed Mesh
      </p>
    </div>
    <div className="absolute right-[14px] top-[22px] text-right text-white font-[Lato,sans-serif]">
      <p className="font-bold text-[26px] leading-[28px]">ANSYS</p>
      <p className="text-[17px] leading-4">R18.0</p>
      <div className="h-px mt-1 ml-2 bg-linear-to-r from-transparent to-[#b9c8f0]" />
      <p className="text-base leading-5">Academic</p>
    </div>
    <MeshBody />
    <ScaleBar />
    <AxisTriad />
  </div>
);

const TabEdge = ({ d }) => (
  <svg viewBox="0 0 11 16" className="w-[11px] h-4 shrink-0" fill="none" stroke="#000">
    <path d={d} />
  </svg>
);

const Tabs = () => {
  const [active, setActive] = useState("Geometry");
  const cls = (name) => `h-4 leading-4 -mt-px ${active === name ? "font-bold bg-white" : "border-t border-black"}`;
  return (
    <div className="flex h-[17px] shrink-0 border-t border-b border-l border-black bg-[#efefef] text-[12px]">
      <div className="-mt-px bg-white">
        <TabEdge d="M1 0l6 16" />
      </div>
      <button type="button" className={cls("Geometry")} onClick={() => setActive("Geometry")}>Geometry</button>
      <TabEdge d="M0 16L8 0M5 6l4 10" />
      <button type="button" className={`text-[11px] ${cls("Print Preview")}`} onClick={() => setActive("Print Preview")}>Print Preview</button>
      <TabEdge d="M1 0l8 16M1 16l4-9" />
      <button type="button" className={`text-[11px] ${cls("Report Preview")}`} onClick={() => setActive("Report Preview")}>Report Preview</button>
      <TabEdge d="M0 16L8 0" />
    </div>
  );
};

/* ---------- messages ---------- */

const messages = [
  {
    text: "One or more entities failed to mesh. The mesh of the bodies containing these entities may not be up-to-date.  However, meshi",
    source: "Project>Model>Geometry>Part 1 Bodies>Part 1",
  },
  {
    text: "One or more surfaces cannot be meshed with acceptable quality. Try using a different element size or virtual topology.",
    source: "Project>Model>Geometry>Part 1 Bodies>Part 1",
  },
  {
    text: "A mesh could not be generated using the current meshing options and settings.",
    source: "Project>Model>Mesh",
  },
];

const Messages = () => (
  <section className="mt-1.5 h-[91px] shrink-0 overflow-hidden bg-white">
    <PaneTitle closable>
      <span className="pl-0.5">Messages</span>
    </PaneTitle>
    <table className="w-full table-fixed border-collapse border-b-2 border-[#a0a0a0]">
      <colgroup>
        <col className="w-[51px]" />
        <col />
        <col className="w-[305px]" />
        <col className="w-[207px]" />
      </colgroup>
      <thead>
        <tr className="h-[17px] bg-[#efefef] border-b border-[#555]">
          <th className="p-0 border-l border-[#555]" />
          <th className="p-0 pl-[3px] font-normal text-left leading-4 border-l border-[#555]">Text</th>
          <th className="p-0 pl-[3px] font-normal text-left leading-4 border-l border-[#555]">Association</th>
          <th className="p-0 pl-[3px] font-normal text-left leading-4 border-l border-[#555]">Timestamp</th>
        </tr>
      </thead>
      <tbody>
        {messages.map((m) => (
          <tr key={m.text} className="h-[17px] border-b border-[#b4b4b4]">
            <td className="p-0 pl-[3px] leading-4 bg-[#efefef] border-l border-b border-[#666]">Error</td>
            <td className="p-0 pl-[3px] leading-4 overflow-hidden whitespace-pre border-l border-l-[#666]">{m.text}</td>
            <td className="p-0 pl-[3px] leading-4 overflow-hidden whitespace-nowrap border-l border-l-[#b4b4b4]">{m.source}</td>
            <td className="p-0 pl-[3px] leading-4 overflow-hidden whitespace-nowrap border-l border-l-[#b4b4b4]">
              Thursday, January 17, 2019 15:43:57
            </td>
          </tr>
        ))}
      </tbody>
    </table>
  </section>
);

const App = () => (
  <div className="flex flex-col w-full h-screen overflow-hidden bg-[#f3f5f7] text-black text-[11px] leading-4 font-['Open_Sans',sans-serif]">
    <TitleBar />
    <Toolbars />
    <main className="flex flex-1 min-h-0 gap-[5px]">
      <aside className="flex flex-col w-[423px] shrink-0">
        <Outline />
        <Details />
      </aside>
      <div className="flex flex-col flex-1 min-w-0">
        <Viewport />
        <Tabs />
        <Messages />
      </div>
    </main>
  </div>
);

export default App;
